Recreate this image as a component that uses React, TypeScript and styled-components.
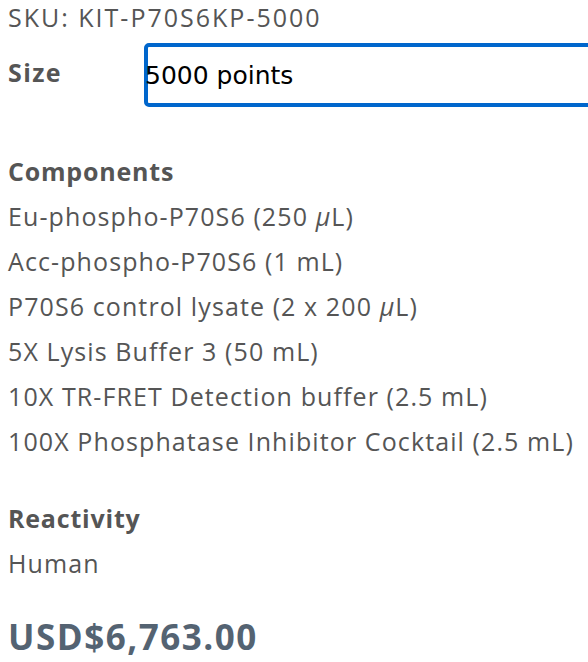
import { createGlobalStyle, styled } from 'styled-components';

const GlobalStyle = createGlobalStyle`
  html, body {
    margin: 0;
    padding: 0;
    background: #fff;
  }
  body {
    font-family: 'Open Sans', 'Noto Sans CJK KR', sans-serif;
    color: #555;
    overflow: hidden;
  }
`;

const components = [
  'Eu-phospho-P70S6 (250 μL)',
  'Acc-phospho-P70S6 (1 mL)',
  'P70S6 control lysate (2 x 200 μL)',
  '5X Lysis Buffer 3 (50 mL)',
  '10X TR-FRET Detection buffer (2.5 mL)',
  '100X Phosphatase Inhibitor Cocktail (2.5 mL)',
];

export default function App() {
  return (
    <>
      <GlobalStyle />
      <Page>
        <Sku>SKU: KIT-P70S6KP-5000</Sku>
        <SizeRow>
          <Label>Size</Label>
          <SizeField>5000 points</SizeField>
        </SizeRow>

        <Section>
          <Heading>Components</Heading>
          {components.map((item) => (
            <Line key={item}>
              {item.includes('μL') ? (
                <>
                  {item.split('μ')[0]}
                  <Mu>μ</Mu>
                  {item.split('μ')[1]}
                </>
              ) : (
                item
              )}
            </Line>
          ))}
        </Section>

        <Section $gap={32}>
          <Heading>Reactivity</Heading>
          <Line>Human</Line>
        </Section>

        <Price>USD$6,763.00</Price>
      </Page>
    </>
  );
}

const Page = styled.div`
  padding: 0 0 0 8px;
  width: 680px;
`;

const Sku = styled.div`
  font-size: 25px;
  line-height: 36px;
  margin-top: -1px;
  letter-spacing: 2px;
`;

const SizeRow = styled.div`
  display: flex;
  align-items: center;
  margin-top: 8px;
`;

const Label = styled.div`
  width: 136px;
  font-size: 25px;
  font-weight: 700;
  line-height: 36px;
  margin-top: -6px;
  letter-spacing: 1.4px;
`;

const SizeField = styled.div`
  flex: 1;
  height: 55px;
  border: 4px solid #0066cc;
  border-radius: 5px;
  box-sizing: content-box;
  display: flex;
  align-items: center;
  font-family: 'DejaVu Sans', sans-serif;
  font-size: 25px;
  color: #000;
  text-indent: -3px;
  padding-top: 1px;
`;

const Section = styled.div<{ $gap?: number }>`
  margin-top: ${(p) => p.$gap ?? 42}px;
`;

const Heading = styled.div`
  font-size: 25px;
  font-weight: 700;
  line-height: 45px;
  letter-spacing: 0.8px;
`;

const Line = styled.div`
  font-size: 25px;
  line-height: 45px;
  letter-spacing: 1.1px;
`;

const Mu = styled.span`
  font-style: italic;
`;

const Price = styled.div`
  margin-top: 26px;
  font-size: 35px;
  font-weight: 700;
  color: #546372;
  line-height: 50px;
  letter-spacing: 1.5px;
`;
